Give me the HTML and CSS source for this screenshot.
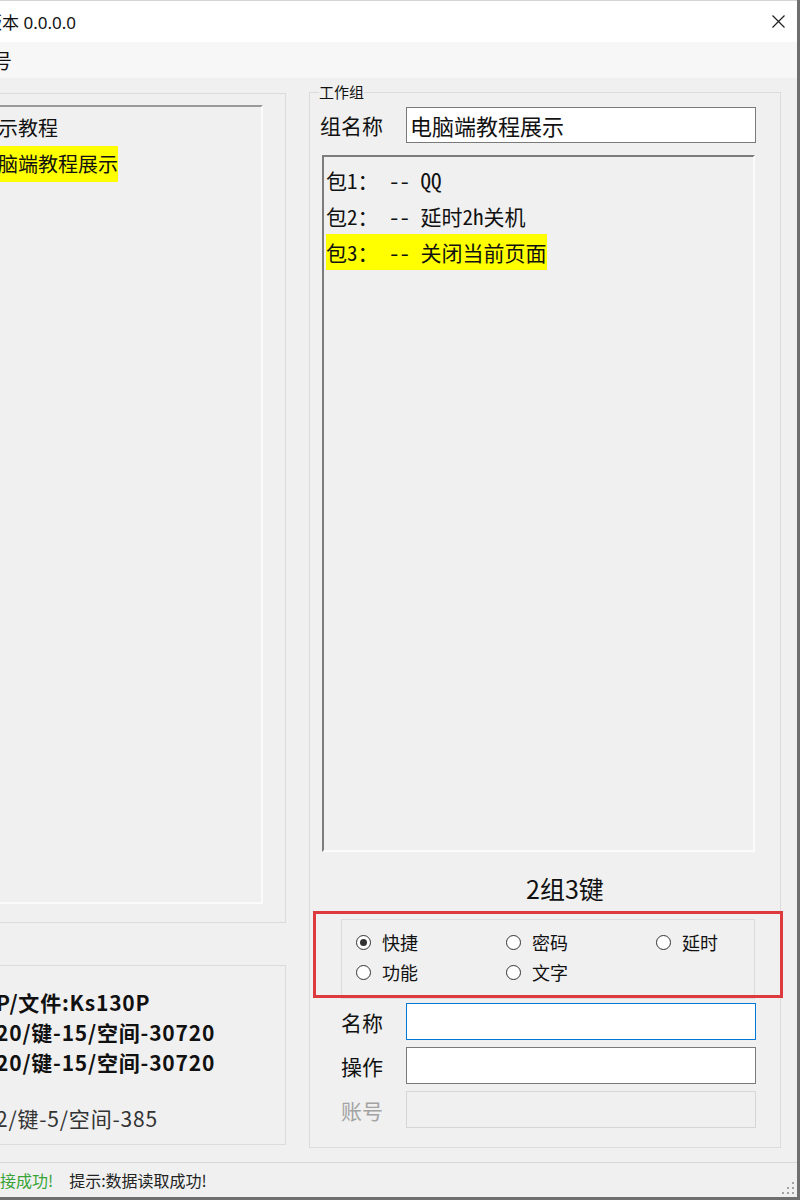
FILE: index.html
```html
<!DOCTYPE html>
<html lang="zh-CN">

<head>
  <meta charset="UTF-8">
  <meta name="viewport" content="width=device-width, initial-scale=1.0">
  <title>版本 0.0.0.0</title>
  <link rel="stylesheet" href="styles.css">
</head>

<body>

  <div class="window">
    <div class="titlebar">
      <span class="title">版本 0.0.0.0</span>
      <svg class="close" width="13" height="13" viewBox="0 0 13 13">
        <path d="M0.5 0.5 L12.5 12.5 M12.5 0.5 L0.5 12.5" stroke="#1f1f1f" stroke-width="1.2" fill="none"/>
      </svg>
    </div>

    <div class="menubar">
      <span class="menu-item">账号</span>
    </div>

    <div class="main">
      <!-- 左侧：工作组列表 + 设备信息 -->
      <div class="side">
        <div class="group group-list">
          <div class="listbox">
            <div class="item">演示教程</div>
            <div class="item"><span class="sel">电脑端教程展示</span></div>
          </div>
        </div>

        <div class="group group-info">
          <p class="info-line">P/文件:Ks130P</p>
          <p class="info-line">20/键-15/空间-30720</p>
          <p class="info-line">20/键-15/空间-30720</p>
          <p class="info-line plain">2/键-5/空间-385</p>
        </div>
      </div>

      <!-- 右侧：当前工作组 -->
      <fieldset class="workgroup">
        <legend>工作组</legend>

        <div class="field-row top">
          <label>组名称</label>
          <input class="text" type="text" value="电脑端教程展示">
        </div>

        <div class="listbox packs">
          <div class="item">包1： -- QQ</div>
          <div class="item">包2： -- 延时2h关机</div>
          <div class="item"><span class="sel">包3： -- 关闭当前页面</span></div>
        </div>

        <div class="count">2组3键</div>

        <div class="type-area">
          <label class="radio-opt"><span class="radio checked"></span><span>快捷</span></label>
          <label class="radio-opt"><span class="radio"></span><span>密码</span></label>
          <label class="radio-opt"><span class="radio"></span><span>延时</span></label>
          <label class="radio-opt"><span class="radio"></span><span>功能</span></label>
          <label class="radio-opt"><span class="radio"></span><span>文字</span></label>
          <div class="mark"></div>
        </div>

        <div class="field-row form">
          <label>名称</label>
          <input class="text focus" type="text">
        </div>
        <div class="field-row form">
          <label>操作</label>
          <input class="text" type="text">
        </div>
        <div class="field-row form off">
          <label>账号</label>
          <input class="text" type="text" disabled>
        </div>
      </fieldset>
    </div>

    <div class="statusbar">
      <span class="ok">连接成功!</span>
      <span class="tip">提示:数据读取成功!</span>
      <svg class="grip" width="12" height="12" viewBox="0 0 12 12">
        <rect x="10" y="0" width="2" height="2" fill="#a3a3a3"/>
        <rect x="5" y="5" width="2" height="2" fill="#a3a3a3"/>
        <rect x="10" y="5" width="2" height="2" fill="#a3a3a3"/>
        <rect x="0" y="10" width="2" height="2" fill="#a3a3a3"/>
        <rect x="5" y="10" width="2" height="2" fill="#a3a3a3"/>
        <rect x="10" y="10" width="2" height="2" fill="#a3a3a3"/>
      </svg>
    </div>
  </div>

</body>

</html>
```

FILE: styles.css
```css
* {
  box-sizing: border-box;
}

body {
  margin: 0;
  background-color: #f0f0f0;
  font-family: "Noto Sans", "Noto Sans CJK SC", sans-serif;
  color: #111;
  overflow: hidden;
}

.window {
  width: 800px;
  height: 1200px;
  display: flex;
  flex-direction: column;
  border-right: 3px solid #6f6f6f;
  border-bottom: 3px solid #6f6f6f;
  overflow: hidden;
}

/* 标题栏 */
.titlebar {
  height: 42px;
  flex-shrink: 0;
  background-color: #ffffff;
  border-top: 1px solid #d4d4d4;
  display: flex;
  align-items: center;
  justify-content: space-between;
}

.title {
  margin-left: -15px;
  font-size: 17px;
  white-space: nowrap;
}

.close {
  margin-right: 12px;
}

.menubar {
  height: 36px;
  flex-shrink: 0;
  background-color: #f7f7f7;
  display: flex;
  align-items: center;
}

.menu-item {
  margin-left: -28px;
  font-size: 20px;
  font-family: "Noto Sans CJK SC", sans-serif;
}

.main {
  height: 1084px;
  flex-shrink: 0;
  display: flex;
}

/* 左侧栏 */
.side {
  margin-left: -40px;
  width: 326px;
  flex-shrink: 0;
  padding-top: 15px;
  display: flex;
  flex-direction: column;
}

.group {
  border: 1px solid #dcdcdc;
}

.group-list {
  height: 830px;
  padding: 11px 22px 18px 13px;
  display: flex;
}

.listbox {
  flex: 1;
  border: 2px solid;
  border-color: #9a9a9a #fbfbfb #fbfbfb #9a9a9a;
  background-color: #f0f0f0;
  padding: 3px 2px;
}

.item {
  font-size: 20px;
  line-height: 36px;
  white-space: nowrap;
  font-family: "Noto Sans CJK SC", sans-serif;
}

.sel {
  display: inline-block;
  background-color: #ffff00;
}

.group-info {
  margin-top: 42px;
  height: 180px;
  padding: 21px 0 0 35px;
  font-family: "Noto Sans CJK SC", sans-serif;
}

.info-line {
  margin: 0;
  font-size: 21px;
  line-height: 30px;
  font-weight: 700;
  letter-spacing: 0.8px;
  white-space: nowrap;
}

.info-line.plain {
  margin-top: 26px;
  font-weight: 400;
  color: #333;
}

/* 右侧工作组 */
.workgroup {
  margin: 4px 0 14px 23px;
  width: 472px;
  height: 1066px;
  min-width: 0;
  border: 1px solid #dcdcdc;
  padding: 0 9px;
  font-family: "Noto Sans CJK SC", sans-serif;
}

.workgroup legend {
  padding: 0;
  font-size: 15px;
  line-height: 20px;
}

.field-row {
  display: flex;
  align-items: center;
}

.field-row label {
  width: 64px;
  margin-right: 23px;
  text-align: right;
  font-size: 21px;
  white-space: nowrap;
}

.field-row.top {
  margin-top: 5px;
}

.text {
  width: 350px;
  height: 36px;
  border: 1px solid #7a7a7a;
  background-color: #ffffff;
  padding: 0 3px;
  font-family: "Noto Sans CJK SC", sans-serif;
  font-size: 22px;
  color: #111;
  outline: none;
}

.text.focus {
  border-color: #0078d7;
}

.packs {
  flex: none;
  margin: 12px 0 0 3px;
  width: 433px;
  height: 697px;
  padding: 5px 2px;
  border-color: #7c7c7c #fbfbfb #fbfbfb #7c7c7c;
}

.packs .item {
  font-family: "Noto Sans Mono CJK SC", "Liberation Mono", "Noto Sans CJK SC", monospace;
  font-size: 21px;
  white-space: pre;
}

.count {
  margin-top: 18px;
  height: 36px;
  line-height: 36px;
  padding-left: 40px;
  text-align: center;
  font-size: 25px;
}

/* 按键类型 */
.type-area {
  position: relative;
  margin: 13px 0 0 22px;
  width: 414px;
  height: 80px;
  border: 1px solid #dcdcdc;
  padding: 7px 0 0 14px;
  display: grid;
  grid-template-columns: repeat(3, 150px);
  grid-auto-rows: 30px;
}

.radio-opt {
  display: flex;
  align-items: center;
  font-size: 18px;
}

.radio {
  width: 15px;
  height: 15px;
  margin-right: 11px;
  border: 1px solid #333;
  border-radius: 50%;
  background-color: #ffffff;
  display: flex;
  align-items: center;
  justify-content: center;
}

.radio.checked::after {
  content: "";
  width: 7px;
  height: 7px;
  border-radius: 50%;
  background-color: #333;
}

.mark {
  position: absolute;
  left: -29px;
  top: -9px;
  width: 470px;
  height: 87px;
  border: 3px solid #dc3a3f;
}

.field-row.form {
  margin-top: 4px;
}

.field-row.form + .field-row.form {
  margin-top: 7px;
}

.field-row.form .text {
  height: 37px;
}

.off label {
  color: #a3a3a3;
}

.off .text {
  background-color: #f0f0f0;
  border-color: #d6d6d6;
}

/* 状态栏 */
.statusbar {
  height: 35px;
  flex-shrink: 0;
  border-top: 1px solid #d7d7d7;
  display: flex;
  align-items: center;
  font-family: "Noto Sans CJK SC", sans-serif;
  font-size: 16px;
}

.ok {
  margin-left: -16px;
  color: #38a336;
}

.tip {
  margin-left: 16px;
  color: #222;
}

.grip {
  margin-left: auto;
  margin-right: 3px;
  margin-bottom: 3px;
  align-self: flex-end;
}
```
